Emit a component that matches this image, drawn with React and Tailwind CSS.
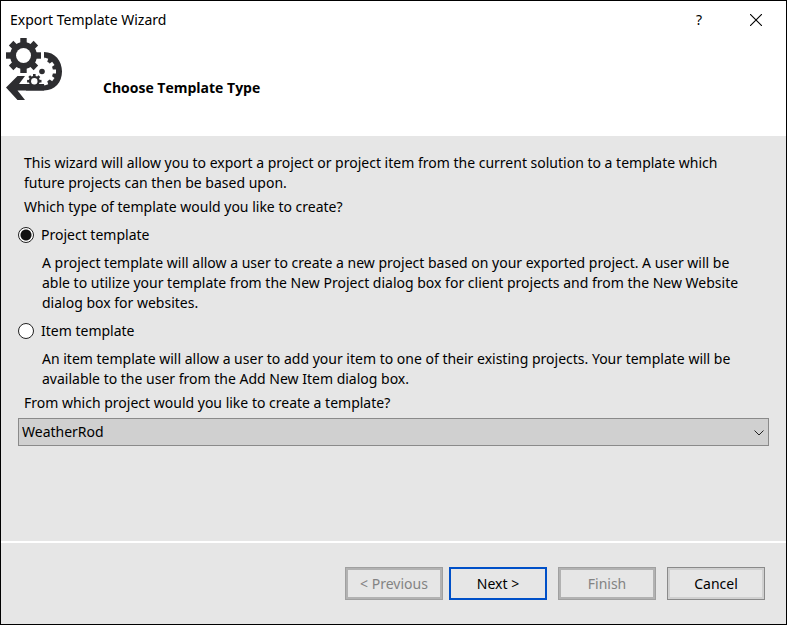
import { useState } from "react";

const Teeth = ({ cx, cy, outer, inner, width, count = 8, offset = 0 }) =>
  Array.from({ length: count }, (_, i) => (
    <rect
      key={i}
      x={cx - width / 2}
      y={cy - outer}
      width={width}
      height={outer - inner}
      transform={`rotate(${offset + (360 / count) * i} ${cx} ${cy})`}
    />
  ));

const TemplateIcon = () => (
  <svg width="56" height="62" viewBox="0 0 56 62" className="shrink-0" aria-hidden="true">
    {/* Return arrow */}
    <path
      d="M38 14 C49 14 56 23 56 33.500 C56 44 49 52.500 38 52.500 H11.500 L19 62 H11.500 L0 49.500 L11.500 38 H19 L13 46 H38 Z"
      fill="#2d2d30"
    />
    {/* Middle gear */}
    <g fill="#fff">
      <circle cx="36" cy="33.500" r="11" />
      <Teeth cx={36} cy={33.5} outer={14} inner={8} width={4} count={10} offset={18} />
    </g>
    <circle cx="36" cy="33.500" r="2.800" fill="#2d2d30" />
    {/* Small gear */}
    <g fill="#2d2d30">
      <path d="M20 46 H35 L38 48 V52.500 H20 Z" />
      <circle cx="28.300" cy="43.200" r="5.500" />
      <Teeth cx={28.3} cy={43.2} outer={7.2} inner={4} width={2.6} />
    </g>
    <circle cx="28.300" cy="43.200" r="3.200" fill="#fff" />
    {/* Large gear */}
    <g fill="#2d2d30">
      <circle cx="17.500" cy="17.500" r="13.500" />
      <Teeth cx={17.5} cy={17.5} outer={17.5} inner={10} width={6.4} />
    </g>
    <circle cx="17.500" cy="17.500" r="7.500" fill="#fff" />
  </svg>
);

const TemplateOption = ({ id, label, checked, onChange, children }) => (
  <div className="mt-2">
    <div className="flex items-center">
      <input
        type="radio"
        id={id}
        name="template-type"
        checked={checked}
        onChange={onChange}
        aria-describedby={`${id}-text`}
        className="w-4 h-4 appearance-none rounded-full border border-[#222] bg-white checked:bg-[radial-gradient(circle,#111_5px,#fff_6px)]"
      />
      <label htmlFor={id} className="pl-[7px]">
        {label}
      </label>
    </div>
    <p id={`${id}-text`} className="mt-2 pl-6 pr-4">
      {children}
    </p>
  </div>
);

const WizardButton = ({ children, className, disabled }) => (
  <button type="button" disabled={disabled} className={`w-[98px] h-[33px] ${className}`}>
    {children}
  </button>
);

const disabledStyle = "border border-[#a0a0a0] text-[#838383] shadow-[inset_0_0_0_2px_#b2b2b2]";

const App = () => {
  const [type, setType] = useState("project");

  return (
    <div className="min-h-screen flex flex-col border border-black bg-[#e6e6e6] font-['Noto_Sans',sans-serif] text-sm leading-5 text-black">
      <header className="h-[135px] bg-white">
        <div className="flex items-center h-[37px] pl-[9px] pr-6">
          <h1 className="grow">Export Template Wizard</h1>
          <button type="button" aria-label="Help" className="w-3 mr-[45px]">
            ?
          </button>
          <button type="button" aria-label="Close">
            <svg width="12" height="12" viewBox="0 0 12 12" stroke="#000" strokeWidth="1.1">
              <path d="M0 0 L12 12 M12 0 L0 12" />
            </svg>
          </button>
        </div>
        <div className="flex items-start pl-[5px]">
          <TemplateIcon />
          <h2 className="mt-10 ml-[41px] font-['Open_Sans',sans-serif] font-bold">Choose Template Type</h2>
        </div>
      </header>

      <main className="grow px-[17px] pt-[17px]">
        <p className="pl-[6px] pr-4">
          This wizard will allow you to export a project or project item from the current solution to a
          template which future projects can then be based upon.
        </p>
        <fieldset>
          <legend className="pt-1 px-[6px]">Which type of template would you like to create?</legend>
          <TemplateOption
            id="project"
            label="Project template"
            checked={type === "project"}
            onChange={() => setType("project")}
          >
            A project template will allow a user to create a new project based on your exported project.
            A user will be able to utilize your template from the New Project dialog box for client
            projects and from the New Website dialog box for websites.
          </TemplateOption>
          <TemplateOption
            id="item"
            label="Item template"
            checked={type === "item"}
            onChange={() => setType("item")}
          >
            An item template will allow a user to add your item to one of their existing projects. Your
            template will be available to the user from the Add New Item dialog box.
          </TemplateOption>
        </fieldset>

        <label htmlFor="source" className="block mt-1 px-[6px]">
          From which project would you like to create a template?
        </label>
        <div className="relative mt-[5px]">
          <select
            id="source"
            className="block w-full h-7 pl-[3px] pr-6 appearance-none border border-[#8a8a8a] bg-[#d0d0d0]"
          >
            <option>WeatherRod</option>
          </select>
          <svg
            width="10"
            height="6"
            viewBox="0 0 10 6"
            fill="none"
            stroke="#222"
            className="absolute right-[5px] top-3 pointer-events-none"
          >
            <path d="M0.500 0.500 L5 5 L9.500 0.500" />
          </svg>
        </div>
      </main>

      <footer className="flex justify-end border-t-2 border-white pt-6 pb-6 pr-[21px]">
        <WizardButton disabled className={disabledStyle}>
          &lt; Previous
        </WizardButton>
        <WizardButton className="ml-[6px] border-2 border-[#0050c8]">Next &gt;</WizardButton>
        <WizardButton disabled className={`ml-[11px] ${disabledStyle}`}>
          Finish
        </WizardButton>
        <WizardButton className="ml-[11px] border border-[#8a8a8a] shadow-[inset_0_0_0_2px_#d0d0d0]">
          Cancel
        </WizardButton>
      </footer>
    </div>
  );
};

export default App;
